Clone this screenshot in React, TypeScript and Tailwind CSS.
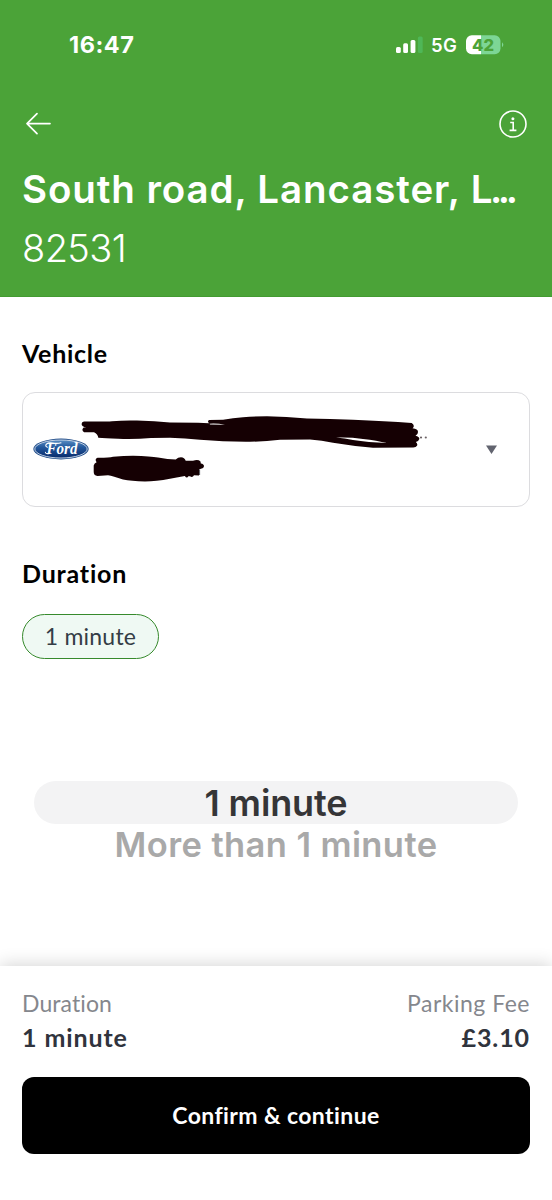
import { useState } from 'react';
import clsx from 'clsx';

const DURATIONS = ['1 minute', 'More than 1 minute'];

function SignalIcon() {
  return (
    <svg width="28" height="18" viewBox="0 0 28 18" fill="#fff">
      <rect x="0" y="11" width="4.8" height="6" rx="1.5" />
      <rect x="7.2" y="7.3" width="4.8" height="9.7" rx="1.5" />
      <rect x="14.6" y="4" width="4.8" height="13" rx="1.5" />
      <rect x="21.9" y="0.5" width="4.8" height="16.5" rx="1.5" fill="#4fb757" />
    </svg>
  );
}

function BatteryIcon() {
  return (
    <svg width="38" height="20" viewBox="0 0 38 20">
      <clipPath id="battery">
        <rect x="0" y="0.3" width="34.5" height="19" rx="5.8" />
      </clipPath>
      <g clipPath="url(#battery)">
        <rect width="15" height="20" fill="#fff" />
        <rect x="15" width="20" height="20" fill="#7dd695" />
      </g>
      <path d="M36 7.3 Q38.6 9.8 36 12.3 Z" fill="#7dd695" />
      <text x="17.1" y="15.5" textAnchor="middle" textLength="22" lengthAdjust="spacingAndGlyphs" fontFamily="Inter, sans-serif" fontWeight="800" fontSize="16" fill="#4ba338">
        42
      </text>
    </svg>
  );
}

function BackIcon() {
  return (
    <svg width="26" height="24" viewBox="0 0 26 24" fill="none" stroke="#fff" strokeWidth="1.7" strokeLinecap="round" strokeLinejoin="round">
      <path d="M25 11.600H2M12 1.600 2 11.600l10 10" />
    </svg>
  );
}

function InfoIcon() {
  return (
    <svg width="28" height="28" viewBox="0 0 28 28" fill="none" stroke="#fff" strokeWidth="1.6">
      <circle cx="14" cy="14" r="13" />
      <circle cx="13.9" cy="8.8" r="1.5" fill="#fff" stroke="none" />
      <path d="M11.2 12.5h3v7.6M10.6 20.4h6.8" />
    </svg>
  );
}

function FordLogo() {
  return (
    <svg className="-mt-px" width="56" height="22" viewBox="0 0 56 22">
      <defs>
        <linearGradient id="ford" x1="0" y1="0" x2="0" y2="1">
          <stop offset="0" stopColor="#5b8fc4" />
          <stop offset="0.4" stopColor="#23589c" />
          <stop offset="1" stopColor="#082a6b" />
        </linearGradient>
      </defs>
      <ellipse cx="28" cy="11" rx="27.7" ry="10.4" fill="#1e4b88" />
      <ellipse cx="28" cy="11" rx="26.2" ry="9" fill="url(#ford)" stroke="#d5e0ee" strokeWidth="0.9" />
      <text x="29" y="15.8" textAnchor="middle" textLength="31" lengthAdjust="spacingAndGlyphs" fontFamily="'Liberation Serif', serif" fontStyle="italic" fontWeight="700" fontSize="16" fill="#fff">
        Ford
      </text>
      <path d="M14.5 9.2c-2-.3-2.3-2-.9-3.2 1.4-1.2 4-1.3 6.4-.9 3 .5 5.5.5 8-.3" fill="none" stroke="#fff" strokeWidth="1.1" strokeLinecap="round" />
      <path d="M12.4 14.2c.2 1.8 2.8 2 4.6.8" fill="none" stroke="#fff" strokeWidth="1.1" strokeLinecap="round" />
    </svg>
  );
}

// Scribbled-out vehicle name and plate
function RedactedDetails() {
  return (
    <svg width="352" height="72" viewBox="80 413.5 352 72" fill="#150003">
      <path d="M84 420.9 Q105 421.3 112 420.7 Q124 419.6 137 420 Q155 420.4 170 422 L198 422.3 L209 422.8 Q207 421 209 419.4 L223 419.3 Q233 417.6 243 416.7 Q255 415.7 267 415.7 Q286 415.9 307 418 Q330 418.3 353 419.3 Q385 420.6 411.7 422.5 Q415.5 425 412.5 427.8 Q418 428.5 418 431.5 Q418 434 415.5 435.2 Q419.5 436 419.3 438.5 Q418.6 441 415.8 441.5 Q418 443 417 445.3 Q416 447.2 413 447.1 L373 447.3 Q352 445.5 333 442.3 Q322 439.8 310 439 L280 439.3 Q265 441 250 441.3 Q225 441.5 200 439.3 Q185 437.8 170 437.3 L151 437.5 Q135 438.8 118 438.2 Q105 437.8 98.3 437.3 Q97.8 433.5 94 431.8 L84 431.8 Q81 429.5 83.6 427 L86.5 426.7 Q81.6 426.5 81.6 423.5 Q81.7 421.2 84 420.9 Z" />
      <path d="M97.5 457.3 Q109 457.4 113 456.2 Q124 455.3 133 455.3 Q151 456 158 457 Q168 459 175.7 459 Q178 456.7 181 456.7 Q184.5 457 185.7 460.2 L193 460.3 Q198 458.5 200.5 461 L200.8 463 Q204 463.5 204 465.7 Q203.8 468 201 468.3 L199 469 L199 475 L194 474.8 Q192.5 477.5 190 475.8 L188.3 475.8 Q187 478.5 184.8 475.6 Q176 477 170 478.3 Q156 481 145 481 Q131 480.6 123 479 Q113 475.5 108 474.7 L97.5 475.5 Q93.5 475 93.7 471 L93.7 465 Q94.3 462.5 96.6 461.7 Q94.3 458.5 97.5 457.3 Z" />
      <path d="M336 437.1 Q350 436.6 363 438.4 Q377 440 387 442.6 Q368 441.6 353 439.4 Q345 438 336 437.1Z" fill="#fff" />
      <path d="M209.5 423.2 Q217 422.7 225 424.2 L210 423.9Z" fill="#fff" />
      <path d="M199.6 469v5.5" stroke="#4d4d52" />
      <circle cx="421" cy="437" r="1.1" fill="#6b6265" />
      <circle cx="425.8" cy="437" r="1.1" fill="#6b6265" />
    </svg>
  );
}

export default function App() {
  const [selected, setSelected] = useState(DURATIONS[0]);

  return (
    <div className="flex h-[1200px] w-[552px] flex-col overflow-hidden bg-white font-['Lato',sans-serif] text-black">
      {/* Header */}
      <header className="h-[297px] shrink-0 border-b border-[#439b31] bg-[#4ba338] px-[23px] font-['Inter',sans-serif] text-white">
        <div className="flex h-[90px] items-center justify-between pr-[25px] pl-[46px]">
          <span className="text-[23.5px] leading-[28px] font-bold tracking-[0.5px]">16:47</span>
          <div className="flex items-center">
            <SignalIcon />
            <span className="ml-[7px] w-[27px] text-[18.5px] leading-5 font-semibold tracking-[0.3px]">5G</span>
            <span className="ml-2"><BatteryIcon /></span>
          </div>
        </div>
        <div className="flex h-[67px] items-center justify-between pr-0.5 pl-[2px]">
          <button aria-label="Back"><BackIcon /></button>
          <button aria-label="Parking information"><InfoIcon /></button>
        </div>
        <h1 className="mt-[7px] -ml-px text-[38.5px] leading-[50px] font-semibold tracking-[0.9px] whitespace-nowrap">
          South road, Lancaster, <span className="tracking-[-2.5px]">L</span><span className="tracking-[-4.5px]">...</span>
        </h1>
        <p className="mt-[9px] -ml-px text-[38px] leading-[50px] font-light tracking-[-0.6px]">82531</p>
      </header>

      <main className="flex grow flex-col px-[22px]">
        {/* Vehicle */}
        <h2 className="mt-[40px] text-[25px] leading-8 font-bold tracking-[0.7px]">Vehicle</h2>
        <button className="mt-[23px] flex h-[115px] items-center rounded-[13px] border-[1.5px] border-[#dcdcdf] pr-[32px] pl-[10px]">
          <FordLogo />
          <span className="-ml-[9px]"><RedactedDetails /></span>
          <svg className="ml-auto" width="11" height="9" viewBox="0 0 11 9">
            <path d="M0 .5h11L5.5 9z" fill="#62646f" />
          </svg>
        </button>

        {/* Duration */}
        <h2 className="mt-[50px] text-[25px] leading-8 font-bold tracking-[0.8px]">Duration</h2>
        <div className="mt-[25px] flex h-[45px] w-[137px] items-center justify-center rounded-full border-[1.5px] border-[#368a2c] bg-[#eff9f3] text-[23px] tracking-[0.2px] text-[#343d46]">
          {selected}
        </div>

        <div className="mt-[122px] flex flex-col items-center px-[12px] font-['Inter',sans-serif]">
          {DURATIONS.map(d => (
            <button
              key={d}
              onClick={() => setSelected(d)}
              className={clsx(
                'w-full rounded-full text-center font-semibold',
                d === selected
                  ? 'h-[43px] bg-[#f3f3f4] text-[36px] leading-[45px] tracking-[-0.1px] text-[#353537]'
                  : 'h-[40px] text-[34.5px] leading-[41px] tracking-[0.4px] text-[#a9a9a9]',
              )}
            >
              {d}
            </button>
          ))}
        </div>
      </main>

      {/* Summary and checkout */}
      <footer className="h-[234px] shrink-0 bg-white px-[22px] pt-[21px] shadow-[0_-2px_16px_rgba(0,0,0,0.16)]">
        <div className="flex justify-between">
          <div>
            <div className="text-[23px] leading-8 tracking-[0.1px] text-[#85878d]">Duration</div>
            <div className="mt-[2px] text-[25px] leading-8 font-bold tracking-[0.9px] text-[#30343d]">1 minute</div>
          </div>
          <div className="text-right">
            <div className="text-[23px] leading-8 tracking-[0.5px] text-[#85878d]">Parking Fee</div>
            <div className="mt-[2px] text-[25px] leading-8 font-bold tracking-[0.9px] text-[#30343d]">£3.10</div>
          </div>
        </div>
        <button className="mt-[24px] flex h-[77px] w-full items-center justify-center rounded-[12px] bg-black text-[23px] font-bold tracking-[0.4px] text-white">
          Confirm &amp; continue
        </button>
      </footer>
    </div>
  );
}
